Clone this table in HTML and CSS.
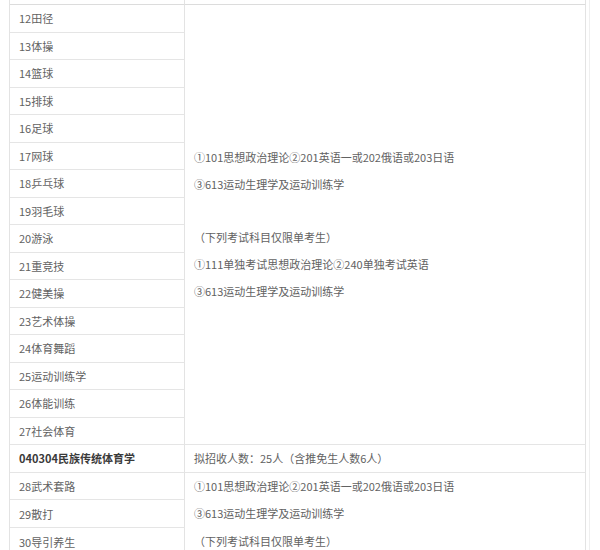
FILE: index.html
```html
<!DOCTYPE html>
<html lang="zh-CN">
<head>
<meta charset="utf-8">
<title>招生专业目录</title>
<link rel="stylesheet" href="styles.css">
</head>
<body>
<div class="page">
<table class="catalog">
  <tr class="prev"><td class="c1"></td><td class="c2"></td></tr>
  <tr><td class="c1">12田径</td><td class="c2 exam" rowspan="16">
    <p>①101思想政治理论②201英语一或202俄语或203日语</p>
    <p>③613运动生理学及运动训练学</p>
    <p class="blank"></p>
    <p>（下列考试科目仅限单考生）</p>
    <p>①111单独考试思想政治理论②240单独考试英语</p>
    <p>③613运动生理学及运动训练学</p>
  </td></tr>
  <tr><td class="c1">13体操</td></tr>
  <tr><td class="c1">14篮球</td></tr>
  <tr><td class="c1">15排球</td></tr>
  <tr><td class="c1">16足球</td></tr>
  <tr><td class="c1">17网球</td></tr>
  <tr><td class="c1">18乒乓球</td></tr>
  <tr><td class="c1">19羽毛球</td></tr>
  <tr><td class="c1">20游泳</td></tr>
  <tr><td class="c1">21重竞技</td></tr>
  <tr><td class="c1">22健美操</td></tr>
  <tr><td class="c1">23艺术体操</td></tr>
  <tr><td class="c1">24体育舞蹈</td></tr>
  <tr><td class="c1">25运动训练学</td></tr>
  <tr><td class="c1">26体能训练</td></tr>
  <tr><td class="c1">27社会体育</td></tr>
  <tr><td class="c1 major">040304民族传统体育学</td><td class="c2">拟招收人数：25人（含推免生人数6人）</td></tr>
  <tr><td class="c1">28武术套路</td><td class="c2 exam2" rowspan="3">
    <p>①101思想政治理论②201英语一或202俄语或203日语</p>
    <p>③613运动生理学及运动训练学</p>
    <p>（下列考试科目仅限单考生）</p>
  </td></tr>
  <tr><td class="c1">29散打</td></tr>
  <tr><td class="c1">30导引养生</td></tr>
</table>
</div>
</body>
</html>
```

FILE: styles.css
```css
html, body {
  margin: 0;
  padding: 0;
  background: #ffffff;
}
body {
  font-family: "Noto Sans CJK SC", "Noto Sans", sans-serif;
  font-size: 11px;
  color: #626262;
  overflow: hidden;
}
.page {
  width: 580px;
  padding-left: 9px;
  border-right: 1px solid #efefef;
}
.catalog {
  width: 577px;
  margin-top: -22.5px;
  border-collapse: separate;
  border-spacing: 0;
  border-left: 1px solid #e3e3e3;
  table-layout: fixed;
}
.catalog td {
  height: 26.5px;
  padding: 0 0 0 9px;
  border-bottom: 1px solid #e5e5e5;
  border-right: 1px solid #e3e3e3;
  vertical-align: middle;
  white-space: nowrap;
  line-height: 16px;
}
.catalog td.c1 {
  width: 165px;
}
.catalog .prev td {
  border-bottom-color: #dcdcdc;
}
.catalog td.major {
  font-weight: bold;
  color: #3a3a3a;
}
.exam p {
  margin: 0;
  line-height: 27px;
  height: 27px;
}
.exam p.blank {
  height: 26px;
}
.catalog td.exam2 {
  vertical-align: top;
}
.exam2 p {
  margin: 0;
  line-height: 27.5px;
  height: 27.5px;
}
```
